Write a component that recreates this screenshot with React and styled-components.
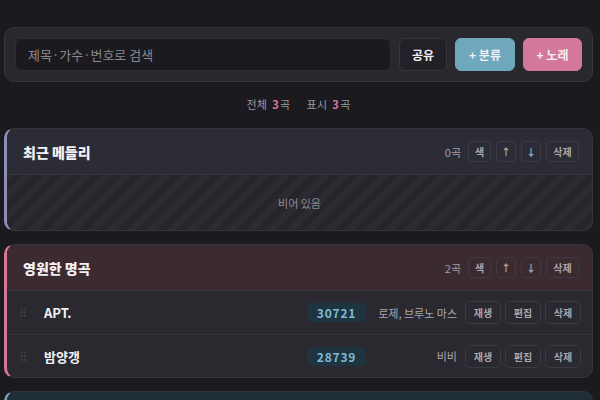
import React from "react";
import styled, { createGlobalStyle } from "styled-components";

const GlobalStyle = createGlobalStyle`
  html, body {
    margin: 0;
    padding: 0;
    background: #1b1a1f;
    color: #e8e6ea;
    font-family: "Noto Sans CJK KR", "Noto Sans", sans-serif;
    overflow: hidden;
  }
  * { box-sizing: border-box; }
`;

const categories = [
  {
    id: 1,
    name: "최근 메들리",
    accent: "#8e8db5",
    headBg: "#2b2c36",
    songs: [],
  },
  {
    id: 2,
    name: "영원한 명곡",
    accent: "#d4789b",
    headBg: "#3b2a30",
    songs: [
      { id: 1, title: "APT.", number: "30721", artist: "로제, 브루노 마스" },
      { id: 2, title: "밤양갱", number: "28739", artist: "비비" },
    ],
  },
  {
    id: 3,
    name: "드라이브",
    accent: "#6fa8bd",
    headBg: "#1f2e36",
    songs: [],
  },
];

const Page = styled.div`
  padding: 27px 7px 0 4px;
  display: flex;
  flex-direction: column;
`;

const Toolbar = styled.div`
  display: flex;
  align-items: center;
  gap: 8px;
  padding: 10px;
  background: #29282e;
  border: 1px solid #37363c;
  border-radius: 10px;
`;

const Search = styled.input`
  flex: 1;
  height: 33px;
  padding: 0 12px;
  background: #1b1a1f;
  border: 1px solid #2f2e34;
  border-radius: 6px;
  color: #e8e6ea;
  font-family: inherit;
  font-size: 13px;
  outline: none;
  &::placeholder {
    color: #8a8890;
  }
`;

const ToolButton = styled.button`
  height: 33px;
  width: ${(p) => p.$w}px;
  padding: 0;
  border-radius: 6px;
  border: 1px solid ${(p) => (p.$bg ? p.$bg : "#37363c")};
  background: ${(p) => p.$bg || "#222127"};
  color: #f2f0f4;
  font-family: inherit;
  font-size: 12px;
  font-weight: 700;
`;

const Stats = styled.div`
  display: flex;
  justify-content: center;
  gap: 16px;
  padding: 14px 0 16px;
  font-size: 11px;
  color: #9c9aa2;
  letter-spacing: 0.3px;
  b {
    color: #e0799f;
    font-weight: 700;
    margin: 0 1px 0 5px;
  }
`;

const Card = styled.section`
  border: 1px solid #36353c;
  border-left: 3px solid ${(p) => p.$accent};
  border-radius: 10px;
  overflow: hidden;
  margin-bottom: 13px;
  background: #29292f;
`;

const CardHead = styled.header`
  height: 46px;
  display: flex;
  align-items: center;
  padding: 0 13px 0 16px;
  background: ${(p) => p.$bg};
  border-bottom: 1px solid #36353c;
`;

const CardTitle = styled.h2`
  flex: 1;
  margin: 0;
  font-size: 14px;
  font-weight: 800;
  color: #f3f1f4;
`;

const Count = styled.span`
  font-size: 11px;
  color: #a19fa7;
  margin-right: 7px;
`;

const MiniButton = styled.button`
  height: 21px;
  width: ${(p) => p.$w}px;
  padding: 0;
  margin-left: 5px;
  background: transparent;
  border: 1px solid #3c3b43;
  border-radius: 4px;
  color: #a8a6ae;
  font-family: inherit;
  font-size: 10px;
  font-weight: 700;
  &:first-of-type {
    margin-left: 0;
  }
`;

const Empty = styled.div`
  height: 55px;
  display: flex;
  align-items: center;
  justify-content: center;
  font-size: 11px;
  color: #8d8b93;
  background: repeating-linear-gradient(
    -45deg,
    #2b2b31 0 7px,
    #25252b 7px 14px
  );
`;

const Row = styled.div`
  height: 43px;
  display: flex;
  align-items: center;
  padding: 0 11px 0 13px;
  & + & {
    border-top: 1px solid #35343b;
  }
`;

const Handle = styled.span`
  width: 7px;
  height: 11px;
  margin-right: 17px;
  background-image: radial-gradient(#4a4950 0.9px, transparent 1.1px);
  background-size: 3px 3.6px;
`;

const SongTitle = styled.span`
  flex: 1;
  font-size: 13px;
  font-weight: 700;
  color: #f3f1f4;
`;

const Number = styled.span`
  height: 19px;
  width: 59px;
  display: inline-flex;
  align-items: center;
  justify-content: center;
  border-radius: 5px;
  background: #1e3440;
  color: #7cbad4;
  font-size: 12px;
  font-weight: 700;
  letter-spacing: 0.8px;
`;

const Artist = styled.span`
  font-size: 11px;
  color: #a8a6ae;
  width: 80px;
  white-space: nowrap;
  text-align: right;
  margin: 0 4px 0 11px;
`;

const RowButton = styled.button`
  height: 23px;
  width: 36px;
  margin-left: 4px;
  background: transparent;
  border: 1px solid #3c3b43;
  border-radius: 5px;
  color: #a8a6ae;
  font-family: inherit;
  font-size: 10px;
  font-weight: 700;
`;

const Category = ({ cat }) => (
  <Card $accent={cat.accent}>
    <CardHead $bg={cat.headBg}>
      <CardTitle>{cat.name}</CardTitle>
      <Count>{cat.songs.length}곡</Count>
      <MiniButton $w={23}>색</MiniButton>
      <MiniButton $w={20}>↑</MiniButton>
      <MiniButton $w={20}>↓</MiniButton>
      <MiniButton $w={33}>삭제</MiniButton>
    </CardHead>
    {cat.songs.length === 0 ? (
      <Empty>비어 있음</Empty>
    ) : (
      cat.songs.map((s) => (
        <Row key={s.id}>
          <Handle />
          <SongTitle>{s.title}</SongTitle>
          <Number>{s.number}</Number>
          <Artist>{s.artist}</Artist>
          <RowButton>재생</RowButton>
          <RowButton>편집</RowButton>
          <RowButton>삭제</RowButton>
        </Row>
      ))
    )}
  </Card>
);

export default function App() {
  return (
    <>
      <GlobalStyle />
      <Page>
        <Toolbar>
          <Search placeholder="제목·가수·번호로 검색" />
          <ToolButton $w={48}>공유</ToolButton>
          <ToolButton $w={60} $bg="#6fa8bd">+ 분류</ToolButton>
          <ToolButton $w={59} $bg="#d4789b">+ 노래</ToolButton>
        </Toolbar>
        <Stats>
          <span>
            전체<b>3</b>곡
          </span>
          <span>
            표시<b>3</b>곡
          </span>
        </Stats>
        {categories.map((c) => (
          <Category key={c.id} cat={c} />
        ))}
      </Page>
    </>
  );
}
